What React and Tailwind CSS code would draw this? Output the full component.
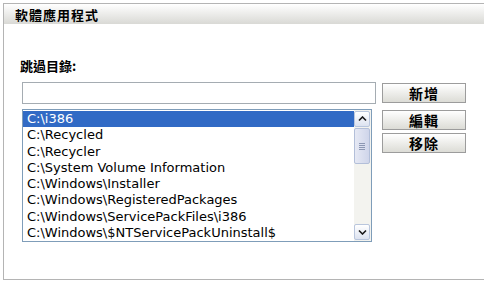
import React from 'react';

const folders = [
  'C:\\i386',
  'C:\\Recycled',
  'C:\\Recycler',
  'C:\\System Volume Information',
  'C:\\Windows\\Installer',
  'C:\\Windows\\RegisteredPackages',
  'C:\\Windows\\ServicePackFiles\\i386',
  'C:\\Windows\\$NTServicePackUninstall$',
];

const cjk = { fontFamily: '"Noto Sans CJK TC", "Noto Sans", sans-serif' };

const Button = ({ label, className = '' }) => (
  <button
    className={`w-[84px] h-[20px] border border-[#9c9c9c] bg-gradient-to-b from-[#ffffff] to-[#dcdcd6] text-[14px] font-bold leading-none text-black flex items-center justify-center tracking-[1px] ${className}`}
    style={cjk}
  >
    {label}
  </button>
);

const ScrollButton = ({ down }) => (
  <div className="w-[16px] h-[16px] border border-[#b9c6dd] rounded-[2px] bg-gradient-to-b from-[#ffffff] to-[#dde3f0] flex items-center justify-center">
    <svg width="9" height="6" viewBox="0 0 9 6">
      <path
        d={down ? 'M1 1.5 L4.5 5 L8 1.5' : 'M1 4.5 L4.5 1 L8 4.5'}
        fill="none"
        stroke="#1a1a1a"
        strokeWidth="1.6"
      />
    </svg>
  </div>
);

const App = () => {
  return (
    <div className="w-[484px] h-[287px] bg-white overflow-hidden pt-[3px] pl-[3px]">
      <div className="w-[520px] h-[277px] border-t border-l border-b border-[#b4b4b4] flex flex-col">
        <div className="h-[20px] bg-gradient-to-b from-[#ffffff] to-[#d9d9d5] flex items-center pl-[11px]">
          <span className="text-[13px] font-bold text-black tracking-[1px] leading-none" style={cjk}>
            軟體應用程式
          </span>
        </div>

        <div className="pl-[18px] pt-[34px]">
          <div className="-ml-[2px] h-[16px] text-[13px] font-bold leading-[16px] text-black" style={cjk}>
            跳過目錄:
          </div>

          <div className="mt-[8px] flex items-center">
            <input
              type="text"
              className="w-[354px] h-[22px] border border-[#a5acb2] bg-white outline-none"
            />
            <Button label="新增" className="ml-[6px]" />
          </div>

          <div className="mt-[5px] flex items-start">
            <div className="w-[350px] h-[133px] border border-[#7f9db9] bg-white flex">
              <div
                className="flex-1 pt-[1px] text-[13px] text-black"
                style={{ fontFamily: '"DejaVu Sans", sans-serif' }}
              >
                {folders.map((f, i) => (
                  <div
                    key={f}
                    className={`h-[16.3px] leading-[16px] pl-[4px] whitespace-nowrap overflow-hidden ${
                      i === 0 ? 'bg-[#316ac5] text-white' : ''
                    }`}
                  >
                    {f}
                  </div>
                ))}
              </div>
              <div className="w-[17px] bg-[#f3f3ef] flex flex-col pt-[1px] pb-[1px]">
                <ScrollButton />
                <div className="w-[16px] h-[36px] mt-[1px] border border-[#b3bfd9] rounded-[2px] bg-gradient-to-r from-[#e6e9f4] to-[#cfd5ea] flex flex-col items-center justify-center gap-[1px]">
                  <div className="w-[6px] h-[1px] bg-[#8c97b3]" />
                  <div className="w-[6px] h-[1px] bg-[#8c97b3]" />
                  <div className="w-[6px] h-[1px] bg-[#8c97b3]" />
                  <div className="w-[6px] h-[1px] bg-[#8c97b3]" />
                </div>
                <div className="flex-1" />
                <ScrollButton down />
              </div>
            </div>

            <div className="ml-[10px] pt-[1px] flex flex-col gap-[3px]">
              <Button label="編輯" />
              <Button label="移除" />
            </div>
          </div>
        </div>
      </div>
    </div>
  );
};

export default App;
